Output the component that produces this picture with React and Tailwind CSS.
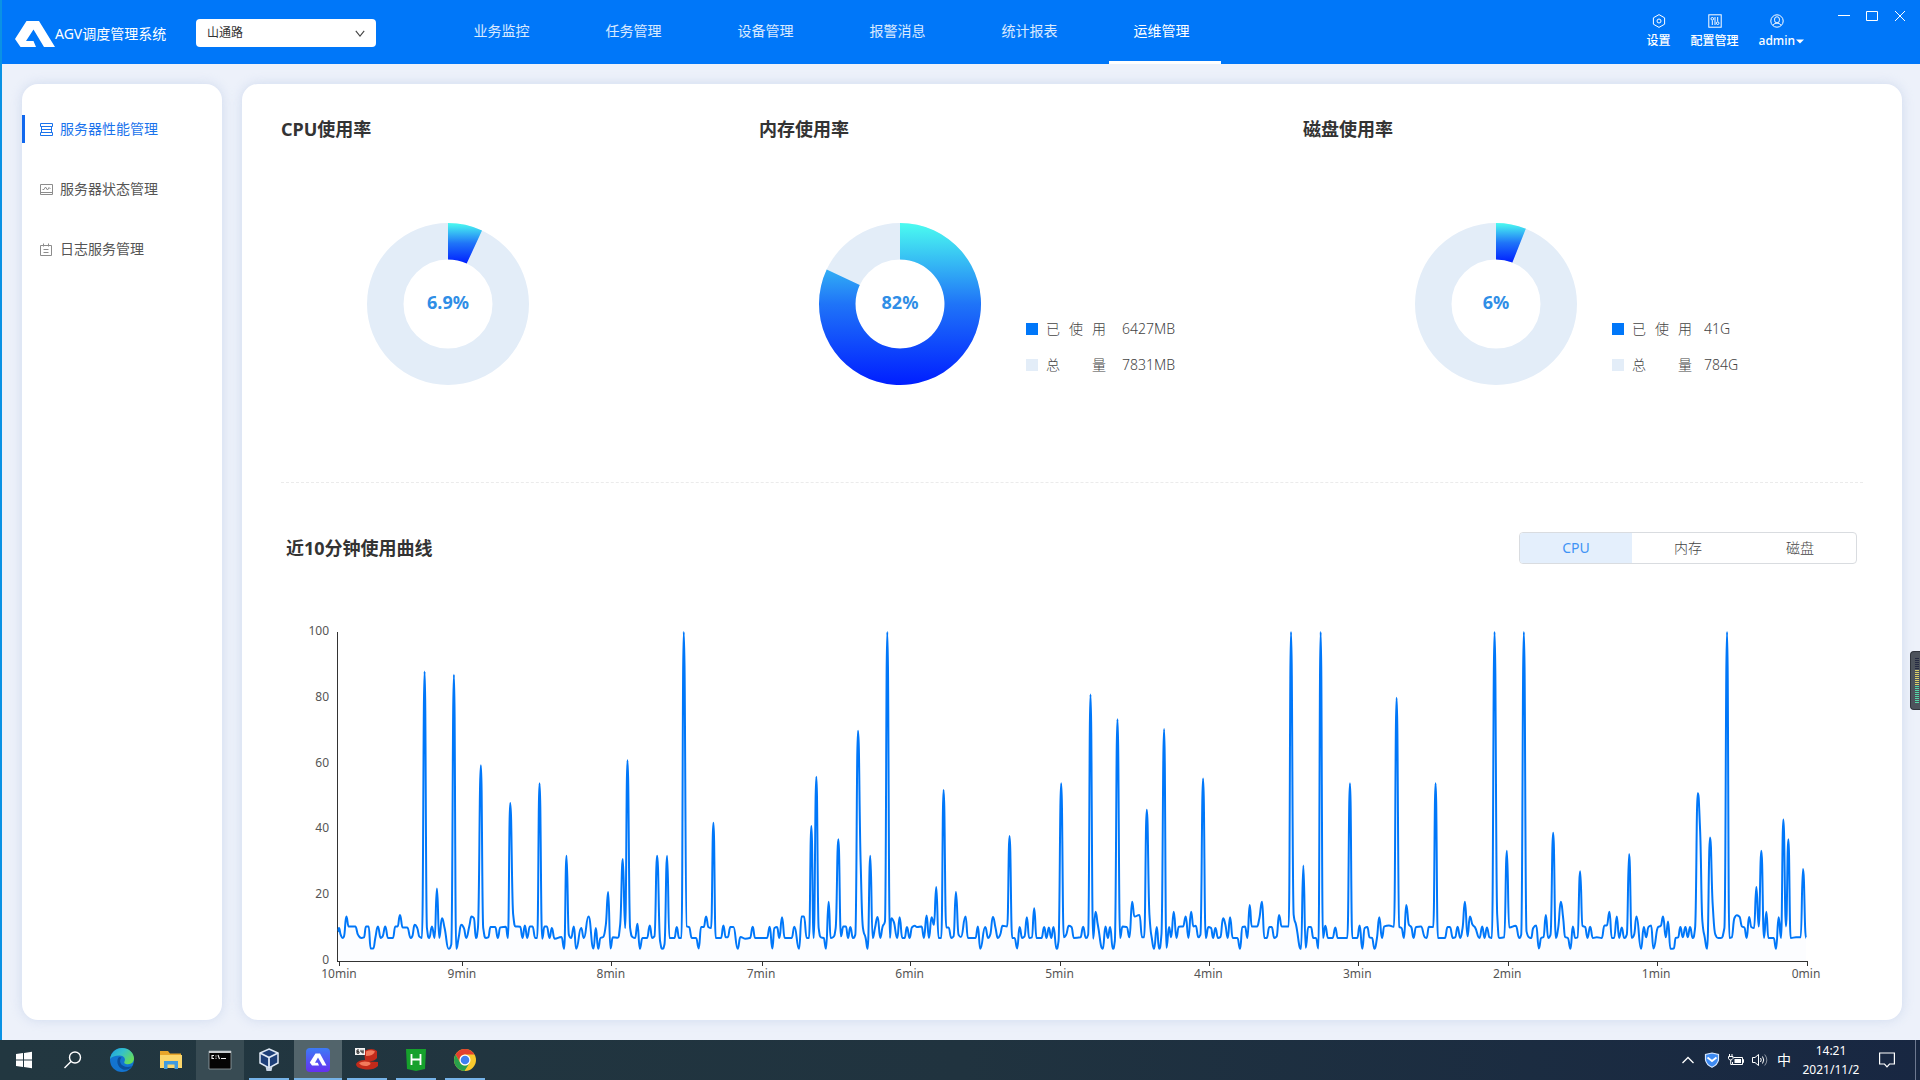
import React, { useState } from "react";

/* ---------- CPU trace: [position, percent] runs, shifted by each run's start ---------- */

const PLOT_WIDTH = 4410;

const RUNS = [
  {
    start: -112,
    points: [
      [112, 9], [115, 10], [120, 8], [126, 7], [130, 7.5], [137, 13.5], [144, 10.5], [164, 10.5], [172, 8], [182, 7], [190, 7.2],
      [196, 10.5], [204, 10.5], [210, 3.8], [218, 3.8], [224, 7], [232, 10.5], [240, 7], [246, 7.5], [254, 10.5], [262, 7],
      [277, 7], [284, 10.5], [291, 10.5], [298, 14], [306, 10.2], [320, 10.2], [330, 7], [335, 7.5], [342, 11], [350, 10],
      [356, 7.5], [364, 7], [372, 88], [379, 10], [386, 7], [394, 10.5], [402, 7], [409, 22], [416, 7], [424, 13], [432, 10],
      [444, 3.7], [452, 5], [460, 87], [467, 3.7], [474, 7], [482, 11], [490, 10], [497, 7], [506, 10.5], [513, 13.5],
      [520, 13], [526, 7], [532, 10], [541, 59.5], [548, 10], [556, 7], [563, 7.2], [570, 10.3], [584, 10.3], [592, 7],
      [599, 10.2], [616, 10.4], [622, 7], [629, 48], [638, 14], [645, 10.5], [659, 10.4], [666, 7], [673, 10.8], [680, 7],
      [688, 10.5], [696, 10.5], [704, 7], [710, 7], [717, 54], [725, 6.8], [732, 10.5], [739, 10.5], [747, 7], [754, 10],
      [762, 6.8], [783, 7.3], [791, 3.7], [798, 32], [805, 8], [812, 7], [820, 10.5], [827, 3.7], [842, 10], [850, 7],
      [864, 13.5], [879, 3.8], [886, 10], [893, 3.7], [900, 7], [908, 7.3], [916, 11], [923, 21], [930, 3.8], [937, 7.2],
      [952, 7.1], [959, 11], [967, 31], [974, 10], [981, 61], [989, 10], [996, 7.3], [1004, 7], [1011, 11.3], [1018, 3.7],
      [1026, 7], [1040, 7], [1048, 10.8], [1055, 7], [1062, 7.5], [1070, 32], [1079, 6], [1086, 3.7], [1092, 5], [1100, 32],
      [1107, 7], [1122, 7], [1129, 10.3], [1136, 7], [1143, 7], [1150, 100], [1159, 10.5], [1166, 10.3], [1174, 7],
      [1187, 7], [1195, 3.8], [1202, 10.3], [1210, 10.3], [1217, 13.5], [1224, 10.3], [1232, 10], [1239, 42], [1246, 7],
    ],
  },
  {
    start: 1088,
    points: [
      [62, 7], [69, 10.8], [76, 7.2], [82, 7.2], [90, 10.3], [99, 10.3], [112, 3.7], [120, 7.3], [134, 6.8], [149, 7],
      [157, 10.4], [164, 7], [200, 7], [208, 10.4], [216, 3.8], [222, 10], [230, 10.3], [237, 7], [245, 13.3], [253, 7],
      [274, 7], [282, 10.4], [296, 3.7], [304, 13.5], [311, 13.5], [319, 7], [326, 7], [333, 41], [340, 7], [348, 56],
      [355, 10], [362, 7.2], [370, 7], [377, 3.7], [385, 18], [391, 7], [399, 7.3], [406, 10], [414, 37], [422, 7.5],
      [429, 10.5], [437, 10.5], [443, 7], [450, 10.3], [458, 7], [465, 8], [473, 70], [481, 30], [488, 10], [496, 7],
      [502, 3.7], [510, 32], [517, 7], [524, 10], [532, 13.4], [540, 7], [547, 10.5], [554, 12], [561, 100], [569, 7],
      [573, 13], [580, 12], [591, 7], [598, 13.3], [606, 7], [613, 7], [620, 10.3], [628, 7], [635, 10.2], [643, 10.7],
      [650, 10.3], [664, 10.5], [671, 7], [679, 13.8], [686, 7], [694, 13.3], [701, 11], [708, 22.5], [715, 7], [723, 7],
      [730, 52], [738, 10.2], [745, 10.2], [753, 7], [760, 7.5], [767, 21], [775, 8], [782, 7.3], [796, 13.5], [803, 7],
      [826, 7], [833, 10.5], [840, 3.7], [855, 10.3], [864, 7], [870, 8], [878, 13.4], [886, 10], [893, 7], [900, 8],
      [907, 10.7], [921, 10.5], [928, 38], [936, 7], [943, 7], [951, 3.8], [958, 10.3], [966, 7], [973, 7.5], [980, 13.3],
      [987, 7], [995, 7.2], [1002, 16], [1009, 7], [1024, 7], [1032, 10.3], [1039, 7], [1046, 10.2], [1053, 7],
      [1060, 10.3], [1069, 3.7], [1075, 6], [1083, 54], [1091, 7.2], [1098, 8], [1106, 10.7], [1114, 10.3], [1121, 7],
      [1141, 7.2], [1149, 10.4], [1157, 7], [1164, 8], [1171, 81], [1179, 6.8], [1186, 15], [1193, 11], [1208, 3.7],
      [1216, 10.5], [1223, 7], [1230, 10.3], [1238, 3.7], [1244, 6], [1252, 73.5],
    ],
  },
  {
    start: 2288,
    points: [
      [60, 7], [67, 10.5], [80, 10.3], [88, 7.2], [96, 18], [103, 13.5], [118, 14], [126, 7.2], [132, 7.2], [140, 46],
      [148, 14], [155, 7], [162, 3.7], [170, 10.3], [177, 3.7], [184, 8], [192, 70.5], [199, 4], [207, 10.3], [213, 7.2],
      [221, 15], [229, 7], [236, 10.4], [249, 10.5], [257, 13.5], [265, 7], [273, 15], [280, 10.5], [287, 10.7],
      [295, 7.2], [301, 8], [309, 55.5], [317, 7], [325, 10.3], [333, 10], [339, 7], [346, 10], [354, 7], [361, 7.3],
      [369, 13], [376, 11], [383, 7], [390, 13.3], [398, 7], [412, 7], [420, 3.7], [427, 10.3], [435, 10.5], [442, 7],
      [449, 17], [455, 10.5], [471, 10.5], [478, 13], [486, 18], [493, 7], [500, 7], [508, 10.3], [515, 10.3], [523, 7],
      [530, 7.5], [537, 14], [545, 10.5], [566, 10.5], [573, 100], [581, 14], [588, 11], [603, 3.7], [610, 29], [617, 4],
      [625, 10.3], [633, 10.3], [640, 7], [648, 7], [655, 3.8], [662, 100], [669, 7], [676, 10.7], [684, 7], [698, 7],
      [706, 10.2], [713, 7], [742, 7], [750, 54], [757, 7], [772, 7], [779, 10.8], [787, 3.7], [794, 10], [802, 10.3],
      [809, 7.2], [816, 7], [824, 3.7], [831, 7], [838, 13.3], [846, 7], [853, 10.5], [867, 10.8], [882, 10.4], [890, 80],
      [898, 10.4], [905, 10], [912, 7], [919, 17], [927, 11], [934, 10.3], [941, 7], [948, 10.3], [963, 10.5], [975, 7.2],
      [980, 7], [987, 10.4], [1000, 10.3], [1007, 54], [1014, 7], [1035, 7], [1043, 10.3], [1050, 10.3], [1059, 7],
      [1066, 7.2], [1073, 10.4], [1081, 7], [1088, 10], [1095, 18], [1103, 7.5], [1110, 13.5], [1118, 11], [1125, 10.3],
      [1139, 7], [1147, 10.5], [1154, 7], [1161, 10.2], [1169, 7.2], [1176, 7], [1184, 100], [1192, 14], [1199, 7],
      [1213, 7.2], [1221, 33.5],
    ],
  },
  {
    start: 3308,
    points: [
      [208, 10.2], [228, 10.7], [238, 7], [244, 8], [252, 100], [260, 9], [268, 7.2], [274, 7], [280, 10], [289, 10.8],
      [297, 3.8], [304, 7], [311, 7.3], [318, 14], [325, 7], [332, 8], [340, 39], [348, 7], [355, 10], [363, 18],
      [370, 13], [376, 7.3], [384, 7], [392, 3.7], [399, 10.5], [406, 7], [413, 7.2], [421, 27.3], [428, 10.7],
      [436, 10.3], [443, 7], [451, 10.4], [459, 7], [471, 7.2], [486, 7], [494, 10.8], [501, 10.8], [509, 15], [516, 7],
      [523, 7], [531, 13.5], [538, 7], [546, 10.2], [553, 7], [561, 8], [568, 32.5], [576, 7], [583, 8], [590, 13.5],
      [604, 3.7], [612, 10.3], [619, 7.2], [626, 10.3], [634, 10.8], [641, 3.8], [655, 10.3], [663, 10.7], [670, 13.5],
      [678, 7.2], [685, 12], [692, 3.7], [702, 3.8], [708, 7], [715, 7.2], [722, 10.3], [729, 7.2], [737, 10.3],
      [744, 7.2], [751, 10.3], [759, 7], [766, 10], [774, 51], [781, 40], [788, 12], [795, 7.2], [802, 3.7], [811, 37.5],
      [819, 17], [827, 8], [835, 7], [843, 7], [854, 10], [862, 100], [869, 7], [876, 7.2], [884, 13], [891, 13.9],
      [899, 13.5], [907, 10.5], [914, 10.2], [921, 7], [928, 13.4], [935, 10.3], [943, 10], [950, 22.5], [957, 10.5],
      [965, 33.5], [973, 7], [980, 15], [986, 7], [1002, 7], [1009, 3.7], [1017, 13.3], [1024, 7], [1031, 43],
      [1039, 10.5], [1046, 37], [1053, 7], [1069, 7.2], [1083, 7.2], [1090, 28], [1099, 7],
    ],
  },
];

const TICKS = [
  ["10min", 6], ["9min", 375], ["8min", 822], ["7min", 1273], ["6min", 1719], ["5min", 2169],
  ["4min", 2616], ["3min", 3063], ["2min", 3513], ["1min", 3960], ["0min", 4410],
];

const LEVELS = [0, 20, 40, 60, 80, 100];

/* Monotone curve through the samples with rounded peaks that never overshoot. */
function tracePath() {
  const pts = RUNS.flatMap((run) => run.points.map(([x, v]) => [x + run.start, 1000 - v * 10]));
  const n = pts.length;
  const slope = [];
  for (let i = 0; i < n - 1; i++) slope.push((pts[i + 1][1] - pts[i][1]) / (pts[i + 1][0] - pts[i][0]));
  const tangent = pts.map((_, i) => {
    if (i === 0 || i === n - 1) return 0;
    const a = slope[i - 1];
    const b = slope[i];
    return a * b <= 0 ? 0 : (2 * a * b) / (a + b);
  });
  let d = `M${pts[0][0]} ${pts[0][1]}`;
  for (let i = 0; i < n - 1; i++) {
    const h = (pts[i + 1][0] - pts[i][0]) / 2;
    const c1 = `${(pts[i][0] + h).toFixed(1)} ${(pts[i][1] + tangent[i] * h).toFixed(1)}`;
    const c2 = `${(pts[i + 1][0] - h).toFixed(1)} ${(pts[i + 1][1] - tangent[i + 1] * h).toFixed(1)}`;
    d += `C${c1} ${c2} ${pts[i + 1][0]} ${pts[i + 1][1]}`;
  }
  return d;
}

const TRACE = tracePath();

/* ---------- Header ---------- */

function Logo() {
  return (
    <svg viewBox="0 0 40 26" className="h-[26px] w-10 shrink-0" fill="#fff" aria-hidden="true">
      <path d="M11.5 0H24L40 26H29L18.5 8.5L11 20H18.5L21 26H5.5L0 18Z" />
    </svg>
  );
}

const NAV = ["业务监控", "任务管理", "设备管理", "报警消息", "统计报表", "运维管理"];

function HexIcon() {
  return (
    <svg viewBox="0 0 14 14" className="size-[14px]" fill="none" stroke="#fff" strokeWidth="1" aria-hidden="true">
      <path d="M7 .6L12.6 3.8V10.2L7 13.4L1.4 10.2V3.8Z" />
      <circle cx="7" cy="7" r="2" />
    </svg>
  );
}

function SlidersIcon() {
  return (
    <svg viewBox="0 0 14 14" className="size-[14px]" fill="none" stroke="#fff" strokeWidth="1" aria-hidden="true">
      <rect x=".8" y=".8" width="12.4" height="12.4" />
      <path d="M4.3 6.5V11M9.7 3V7.5M7 3V11" />
      <circle cx="4.3" cy="4.8" r="1.3" />
      <circle cx="9.7" cy="9.2" r="1.3" />
    </svg>
  );
}

function UserIcon() {
  return (
    <svg viewBox="0 0 14 14" className="size-[14px]" fill="none" stroke="#fff" strokeWidth="1" aria-hidden="true">
      <circle cx="7" cy="7" r="6.2" />
      <rect x="4.6" y="2.8" width="4.8" height="6" rx="2.3" />
      <path d="M3 11.4Q4 9.3 6 9.2H8Q10 9.3 11 11.4" />
    </svg>
  );
}

function ToolButton({ icon, label, caret }) {
  return (
    <button
      type="button"
      className={
        caret
          ? "relative mr-[9px] flex flex-col items-center gap-[5px] text-xs leading-4 font-medium text-white"
          : "flex flex-col items-center gap-[5px] text-xs leading-4 font-medium text-white"
      }
    >
      {icon}
      <span>{label}</span>
      {caret && (
        <svg viewBox="0 0 8 5" className="absolute bottom-[5px] left-full ml-px h-[5px] w-2" fill="#fff" aria-hidden="true">
          <path d="M0 .5H8L4 4.5Z" />
        </svg>
      )}
    </button>
  );
}

function Header() {
  return (
    <header className="flex h-16 shrink-0 bg-[#0077f9] text-white">
      <div className="flex flex-1 pl-[13px]">
        <div className="flex items-center pt-1">
          <Logo />
          <h1 className="w-[141px] text-sm leading-5 whitespace-nowrap">AGV调度管理系统</h1>
        </div>
        <div className="relative mt-[19px] h-7 w-[180px]">
          <select
            aria-label="站点"
            defaultValue="山通路"
            className="h-7 w-full appearance-none rounded-[4px] bg-white pl-[11px] text-xs text-[#333]"
          >
            <option>山通路</option>
          </select>
          <svg
            viewBox="0 0 10 7"
            className="pointer-events-none absolute top-[11px] right-[11px] h-[7px] w-[10px]"
            fill="none"
            stroke="#444"
            strokeWidth="1.1"
            aria-hidden="true"
          >
            <path d="M.8 .8L5 6L9.2 .8" />
          </svg>
        </div>
        <nav className="ml-[73px] flex gap-5">
          {NAV.map((name) => {
            const active = name === "运维管理";
            return (
              <a
                key={name}
                href="#"
                aria-current={active ? "page" : undefined}
                className={
                  active
                    ? "w-28 border-b-3 border-white pt-[21px] pr-[7px] text-center text-sm leading-5"
                    : "w-28 pt-[21px] pr-[7px] text-center text-sm leading-5 text-white/85"
                }
              >
                {name}
              </a>
            );
          })}
        </nav>
      </div>
      <div className="flex items-start gap-5 pt-[14px]">
        <ToolButton icon={<HexIcon />} label="设置" />
        <ToolButton icon={<SlidersIcon />} label="配置管理" />
        <ToolButton icon={<UserIcon />} label="admin" caret />
      </div>
      <div className="mt-[9px] mr-[14px] ml-[34px] flex h-[14px] items-center gap-4">
        <button type="button" aria-label="最小化">
          <svg viewBox="0 0 12 12" className="size-3" stroke="#fff" aria-hidden="true">
            <path d="M0 5.5H12" />
          </svg>
        </button>
        <button type="button" aria-label="最大化">
          <svg viewBox="0 0 12 12" className="size-3" fill="none" stroke="#fff" aria-hidden="true">
            <path d="M.5 1.5H11.5V10.5H.5Z" />
          </svg>
        </button>
        <button type="button" aria-label="关闭">
          <svg viewBox="0 0 12 12" className="size-3" stroke="#fff" aria-hidden="true">
            <path d="M1 1L11 11M11 1L1 11" />
          </svg>
        </button>
      </div>
    </header>
  );
}

/* ---------- Sidebar ---------- */

const SIDE = [
  {
    name: "服务器性能管理",
    active: true,
    icon: (
      <>
        <path d="M.5 .5H12.5V3.5H.5ZM.5 9.5H12.5V12.5H.5ZM1.5 3.5V9.5M11.5 3.5V9.5M1.5 6.5H11.5" />
      </>
    ),
  },
  {
    name: "服务器状态管理",
    icon: (
      <>
        <path d="M.5 1.5H12.5V11.5H.5ZM.5 9.5H12.5" />
        <path d="M2.5 6.5H4L5.5 4L7.5 7L9 4.5L10.5 6" />
      </>
    ),
  },
  {
    name: "日志服务管理",
    icon: (
      <>
        <path d="M.5 2.5H11.5V12.5H.5ZM3.5 .5V3.5M8.5 .5V3.5" />
        <path d="M3.5 6.5H8.5M3.5 9.5H8.5" />
      </>
    ),
  },
];

function Sidebar() {
  return (
    <aside className="w-[200px] shrink-0 rounded-2xl bg-white pt-[31px] shadow-[0_0_12px_rgba(170,190,225,0.45)]">
      <ul className="flex flex-col gap-8">
        {SIDE.map((item) => (
          <li key={item.name}>
            <a
              href="#"
              aria-current={item.active ? "page" : undefined}
              className={
                item.active
                  ? "flex h-7 items-center border-l-3 border-[#1168ee] pl-[15px] text-sm text-[#1a73ec]"
                  : "flex h-7 items-center border-l-3 border-transparent pl-[15px] text-sm text-[#555]"
              }
            >
              <svg
                viewBox="0 0 13 13"
                className={item.active ? "mr-[7px] size-[13px]" : "mr-[7px] size-[13px] text-[#8c8c8c]"}
                fill="none"
                stroke="currentColor"
                strokeWidth="1"
                aria-hidden="true"
              >
                {item.icon}
              </svg>
              {item.name}
            </a>
          </li>
        ))}
      </ul>
    </aside>
  );
}

/* ---------- Usage rings ---------- */

function point(radius, share) {
  const a = share * 2 * Math.PI;
  return `${(81 + radius * Math.sin(a)).toFixed(2)} ${(81 - radius * Math.cos(a)).toFixed(2)}`;
}

function Donut({ id, share, label }) {
  const large = share > 0.5 ? 1 : 0;
  const wedge = `M81 0A81 81 0 ${large} 1 ${point(81, share)}L${point(44.5, share)}A44.5 44.5 0 ${large} 0 81 36.5Z`;
  return (
    <div className="relative grid size-[162px] shrink-0 place-items-center">
      <svg viewBox="0 0 162 162" className="absolute inset-0 size-full" aria-hidden="true">
        <defs>
          <linearGradient id={id} x1="0" y1="0" x2="0" y2="1">
            <stop offset="0" stopColor="#4bfcf0" />
            <stop offset=".5" stopColor="#1f74f8" />
            <stop offset="1" stopColor="#001eff" />
          </linearGradient>
        </defs>
        <circle cx="81" cy="81" r="62.75" fill="none" stroke="#e3edf8" strokeWidth="36.5" />
        <path d={wedge} fill={`url(#${id})`} />
      </svg>
      <span className="relative pb-1 text-lg leading-6 font-bold text-[#2f8ee6]">{label}</span>
    </div>
  );
}

function Legend({ used, total, wide }) {
  const rows = [
    ["已使用", used, "size-3 bg-[#0077f9]"],
    ["总量", total, "size-3 bg-[#e3edf8]"],
  ];
  return (
    <dl className="flex flex-col gap-4 pt-24 text-sm leading-5 font-light text-[#444]">
      {rows.map(([name, value, swatch]) => (
        <div key={name} className="flex items-center">
          <span className={swatch} />
          <dt className="ml-2 flex w-[60px] justify-between">
            {[...name].map((ch) => (
              <span key={ch}>{ch}</span>
            ))}
          </dt>
          <dd className={wide ? "ml-4" : "ml-3"}>{value}</dd>
        </div>
      ))}
    </dl>
  );
}

function SectionTitle({ children }) {
  return <h2 className="text-lg leading-6 font-bold text-[#333]">{children}</h2>;
}

function Usage() {
  return (
    <div className="grid grid-cols-[478fr_544fr_560fr] border-b border-dashed border-[#ebebeb] pb-[97px]">
      <section>
        <SectionTitle>CPU使用率</SectionTitle>
        <div className="mt-[82px] ml-[86px] flex">
          <Donut id="ring-cpu" share={0.069} label="6.9%" />
        </div>
      </section>
      <section>
        <SectionTitle>内存使用率</SectionTitle>
        <div className="mt-[82px] ml-[60px] flex gap-[45px]">
          <Donut id="ring-memory" share={0.82} label="82%" />
          <Legend used="6427MB" total="7831MB" wide />
        </div>
      </section>
      <section>
        <SectionTitle>磁盘使用率</SectionTitle>
        <div className="mt-[82px] ml-28 flex gap-[35px]">
          <Donut id="ring-disk" share={0.06} label="6%" />
          <Legend used="41G" total="784G" />
        </div>
      </section>
    </div>
  );
}

/* ---------- History chart ---------- */

function Switcher() {
  const [current, setCurrent] = useState("CPU");
  return (
    <div className="flex h-8 w-[338px] overflow-hidden rounded-[4px] border border-[#d9dce0] text-sm">
      {["CPU", "内存", "磁盘"].map((name) => (
        <button
          key={name}
          type="button"
          aria-pressed={current === name}
          onClick={() => setCurrent(name)}
          className={current === name ? "flex-1 bg-[#e4effc] text-[#3f93f5]" : "flex-1 font-light text-[#444]"}
        >
          {name}
        </button>
      ))}
    </div>
  );
}

function Chart() {
  return (
    <div className="mx-14 mt-[68px] mb-[58px] flex min-h-[240px] flex-1">
      <div className="relative flex-1 border-b border-l border-[#333]">
        <svg
          viewBox={`0 0 ${PLOT_WIDTH} 1000`}
          preserveAspectRatio="none"
          className="absolute inset-0 size-full overflow-visible"
          role="img"
          aria-label="CPU"
        >
          <path d={`${TRACE}V1000H0Z`} fill="#0077f9" fillOpacity=".01" />
          <path
            d={TRACE}
            fill="none"
            stroke="#0077f9"
            strokeWidth="2"
            strokeLinejoin="round"
            vectorEffect="non-scaling-stroke"
          />
        </svg>
        {LEVELS.map((level) => (
          <span
            key={level}
            className="absolute right-full mr-[9px] -mt-px -translate-y-1/2 text-xs leading-3 text-[#555]"
            style={{ top: `${100 - level}%` }}
          >
            {level}
          </span>
        ))}
        {TICKS.map(([label, at]) => (
          <span
            key={label}
            className="absolute top-full flex w-0 flex-col items-center gap-[2px] text-xs leading-3 text-[#555]"
            style={{ left: `${(at / PLOT_WIDTH) * 100}%` }}
          >
            <span className="h-[5px] w-px shrink-0 bg-[#333]" />
            <span className="pr-[2px]">{label}</span>
          </span>
        ))}
      </div>
    </div>
  );
}

/* ---------- Taskbar ---------- */

const TASKS = [
  {
    name: "开始",
    icon: (
      <path fill="#fff" d="M4 6L11 5V11.5H4ZM12 4.9L20 3.8V11.5H12ZM4 12.5H11V19L4 18ZM12 12.5H20V20.2L12 19.1Z" />
    ),
  },
  {
    name: "搜索",
    icon: (
      <g fill="none" stroke="#fff" strokeWidth="1.4">
        <circle cx="14" cy="9.5" r="5.5" />
        <path d="M10 13.5L3.5 20" />
      </g>
    ),
  },
  {
    name: "Edge",
    icon: (
      <>
        <defs>
          <linearGradient id="edge-top" x1="0" y1="0" x2="1" y2=".6">
            <stop offset="0" stopColor="#1b9de2" />
            <stop offset=".5" stopColor="#35c1c9" />
            <stop offset="1" stopColor="#66dc5a" />
          </linearGradient>
        </defs>
        <circle cx="12" cy="12" r="12" fill="#1374d0" />
        <path fill="url(#edge-top)" d="M0 11C1 4.5 6 0 12 0C19 0 24 5 24 10.5C24 14 21.500 16.200 18 16.200C15 16.200 13.500 15 14.500 13.500C16 11 14 7.500 9.500 7.500C5 7.500 1.500 9 0 11Z" />
        <path fill="#0b4f9c" d="M9 9C6 12 7 19 13 21.500C17 22.500 20.500 20.500 22 18C17 20 12 18.500 10.500 15C9.500 12.500 10.500 10.500 11.500 9.500Z" />
      </>
    ),
  },
  {
    name: "文件资源管理器",
    icon: (
      <>
        <path fill="#e8a52a" d="M1 3H9L11 5.500H22V20H1Z" />
        <path fill="#fbd66b" d="M1 7H23V20H1Z" />
        <path fill="#3f9be0" d="M5 13H19V21H15.500V16.500H8.500V21H5Z" />
      </>
    ),
  },
  {
    name: "命令提示符",
    tint: true,
    icon: (
      <>
        <path fill="#050505" stroke="#9aa3a8" strokeWidth=".8" d="M1 3H23V21H1Z" />
        <path fill="#c9ced1" d="M1 3H23V5H1Z" />
        <path fill="none" stroke="#eee" strokeWidth="1.100" d="M6 7.500H4V10.500H6M8 7.500V8.500M8 9.700V10.700M10 7L11.500 11M13 10.500H18" />
      </>
    ),
  },
  {
    name: "VirtualBox",
    open: true,
    icon: (
      <>
        <path fill="#1d3f78" stroke="#dfe9f5" strokeWidth="1.500" d="M12 1L21 5V15L12 20L3 15V5Z" />
        <path fill="none" stroke="#dfe9f5" strokeWidth="1.800" d="M3 5L12 9.500L21 5M12 9.500V20" />
        <path fill="#c8d5e6" d="M8.500 18.500L12 20L15.500 18.500L14.500 23H9.500Z" />
      </>
    ),
  },
  {
    name: "AGV调度",
    open: true,
    current: true,
    icon: (
      <>
        <defs>
          <linearGradient id="agv-tile" x1="0" y1="0" x2="0" y2="1">
            <stop offset="0" stopColor="#3d7bf6" />
            <stop offset="1" stopColor="#6630f0" />
          </linearGradient>
        </defs>
        <rect width="24" height="24" rx="4" fill="url(#agv-tile)" />
        <path fill="#fff" d="M9.500 5.500H14L20.500 17.500H16.500L12 9.500L9 14.800H11.800L13 17.500H6L3.800 14.500Z" />
      </>
    ),
  },
  {
    name: "Xshell",
    open: true,
    icon: (
      <>
        <path fill="#c22a1a" d="M9 3Q17 -1 22 3V10Q20 13 14 13.500L23 14V18Q18 23 8 21Q1 20 1 16Q3 12 10 12Z" />
        <path fill="#f27a5c" d="M11 3.500Q16 1 20 3.500Q18 8 11 8ZM4 15Q8 12.500 14 14Q18 16 12 18Q6 18.500 4 15Z" />
        <rect width="10" height="7" fill="#f3f3f3" />
        <path fill="none" stroke="#222" strokeWidth="1" d="M4 2H2V5.200H4V3.700H2M6 1.800V4H8.500M8 1.800V5.500" />
      </>
    ),
  },
  {
    name: "HBuilder",
    open: true,
    icon: (
      <>
        <path fill="#16a12c" d="M2 1H22L21 21L12 23L3 21Z" />
        <path fill="none" stroke="#fff" strokeWidth="1.800" d="M7.500 6V17M16.500 6V17M7.500 11.500H16.500" />
      </>
    ),
  },
  {
    name: "Chrome",
    open: true,
    icon: (
      <>
        <circle cx="12" cy="12" r="11" fill="#f9c92d" />
        <path fill="#e2402f" d="M2.500 6.500A11 11 0 0 1 21.500 6.500H12A5.500 5.500 0 0 0 7.200 14.700Z" />
        <path fill="#29a04b" d="M2.500 6.500A11 11 0 0 0 11.500 23L16.700 14.700A5.500 5.500 0 0 1 7.200 14.700Z" />
        <circle cx="12" cy="12" r="5.500" fill="#fff" />
        <circle cx="12" cy="12" r="4.300" fill="#3f7ff0" />
      </>
    ),
  },
];

function Taskbar() {
  return (
    <footer className="flex h-10 shrink-0 bg-linear-to-r from-[#223740] via-[#20333f] to-[#182742] text-white">
      <div className="flex flex-1 gap-px">
        {TASKS.map((task) => (
          <button
            key={task.name}
            type="button"
            aria-label={task.name}
            className={
              task.current
                ? "flex w-12 flex-col items-center bg-[#52646b]"
                : task.tint
                  ? "flex w-12 flex-col items-center bg-[#384b53]"
                  : "flex w-12 flex-col items-center"
            }
          >
            <svg viewBox="0 0 24 24" className="mt-2 mb-[6px] size-6 shrink-0" aria-hidden="true">
              {task.icon}
            </svg>
            {task.open && (
              <span className={task.current ? "h-[2px] w-12 bg-[#76b3e8]" : "h-[2px] w-10 bg-[#76b3e8]"} />
            )}
          </button>
        ))}
      </div>
      <div className="flex items-center gap-2">
        <svg viewBox="0 0 12 8" className="h-2 w-3" fill="none" stroke="#fff" strokeWidth="1.300" aria-hidden="true">
          <path d="M.5 7L6 1.500L11.500 7" />
        </svg>
        <svg viewBox="0 0 16 16" className="ml-[2px] size-4" aria-hidden="true">
          <path fill="#3d8af2" stroke="#d8e8ff" strokeWidth="1.200" d="M8 1L14.500 2.500V8Q13.500 13 8 15.300Q2.500 13 1.500 8V2.500Z" />
          <path fill="none" stroke="#fff" strokeWidth="1.800" d="M3.500 5.500L8 9L12.500 5.500" />
        </svg>
        <svg viewBox="0 0 16 12" className="h-3 w-4" fill="none" stroke="#fff" aria-hidden="true">
          <path d="M5.500 3.500H14.500V10.500H4.500V8M14.500 5.500H15.500V8.500H14.500M1.500 0V2M4 0V2M.5 2.500H5V4.500Q4 6 2.700 6Q1 6 .5 4.500ZM2.700 6V10.500H4.500" />
          <path fill="#fff" stroke="none" d="M6.500 5H13V9H6.500Z" />
        </svg>
        <svg viewBox="0 0 16 14" className="h-[14px] w-4" fill="none" stroke="#fff" aria-hidden="true">
          <path d="M.5 4.500H3L6.500 1.500V12.500L3 9.500H.5Z" />
          <path d="M8.500 5Q10 7 8.500 9M10.500 3.500Q13 7 10.500 10.500" />
          <path opacity=".5" d="M12.700 1.500Q17 7 12.700 12.500" />
        </svg>
        <span className="w-4 text-center text-sm leading-5">中</span>
        <time className="ml-px flex w-[60px] flex-col items-center text-xs leading-[19px]">
          <span>14:21</span>
          <span>2021/11/2</span>
        </time>
        <svg viewBox="0 0 16 16" className="mr-5 ml-[10px] size-4" fill="none" stroke="#fff" strokeWidth="1.200" aria-hidden="true">
          <path d="M.6 1H15.400V12H10.500L8 14.800L5.500 12H.6Z" />
        </svg>
      </div>
      <span className="mr-1 w-px bg-[#6d7890]" />
    </footer>
  );
}

/* ---------- Docked level meter ---------- */

function Meter() {
  return (
    <div className="absolute top-[651px] right-0 flex h-[59px] w-[10px] justify-end rounded-l-[4px] border border-r-0 border-[#30343c] bg-[#4d535c]">
      <div className="mt-[6px] mr-px flex w-1 flex-col gap-px">
        {Array.from({ length: 23 }, (_, i) => (
          <span
            key={i}
            className={
              i < 6 ? "h-px shrink-0 bg-[#252a42]" : i < 14 ? "h-px shrink-0 bg-[#d9d069]" : "h-px shrink-0 bg-[#54d6a6]"
            }
          />
        ))}
      </div>
    </div>
  );
}

export default function App() {
  return (
    <div className="relative flex h-screen min-h-[900px] min-w-[1280px] flex-col bg-[#edf1fa] font-['Noto_Sans','Noto_Sans_CJK_SC',sans-serif]">
      <div className="flex flex-1 flex-col border-l-2 border-[#0a92e4]">
        <Header />
        <div className="flex flex-1 gap-5 py-5 pr-[18px] pl-5">
          <Sidebar />
          <main className="flex flex-1 flex-col rounded-2xl bg-white px-[39px] pt-[33px] shadow-[0_0_12px_rgba(170,190,225,0.45)]">
            <Usage />
            <div className="mt-[49px] mr-[6px] ml-[5px] flex items-center justify-between">
              <SectionTitle>近10分钟使用曲线</SectionTitle>
              <Switcher />
            </div>
            <Chart />
          </main>
        </div>
      </div>
      <Taskbar />
      <Meter />
    </div>
  );
}
